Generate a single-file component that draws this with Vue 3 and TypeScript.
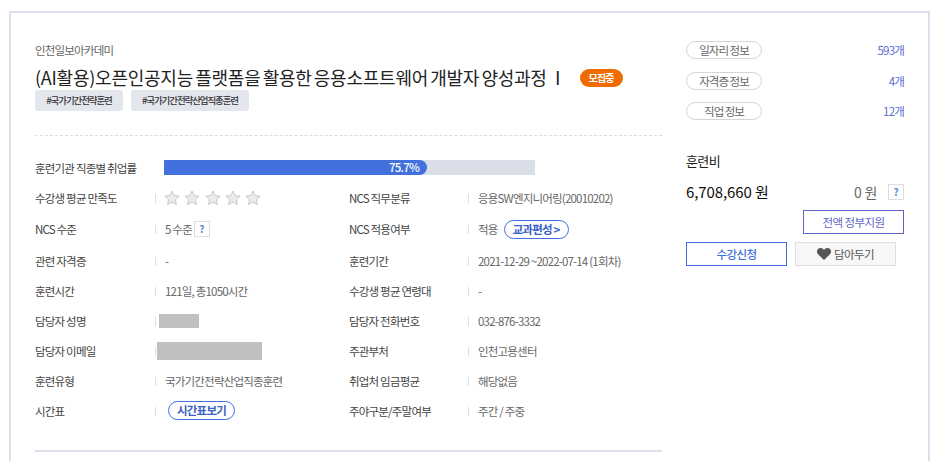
<template>
  <div class="page">
    <div class="card">
      <div class="main">
        <div class="org">인천일보아카데미</div>
        <div class="title-row">
          <h1 class="title">(AI활용)오픈인공지능 플랫폼을 활용한 응용소프트웨어 개발자 양성과정 Ⅰ</h1>
          <span class="status">모집중</span>
        </div>
        <div class="tags">
          <span v-for="t in tags" :key="t" class="tag">{{ t }}</span>
        </div>
        <div class="dash"></div>
        <div class="rate-row">
          <span class="label">훈련기관 직종별 취업률</span>
          <div class="bar">
            <div class="bar-fill" :style="{ width: fillWidth + 'px' }">{{ rate }}%</div>
          </div>
        </div>
        <div class="grid">
          <div class="cell">
            <span class="label">수강생 평균 만족도</span>
            <div class="value stars">
              <svg v-for="n in 5" :key="n" width="16" height="16" viewBox="0 0 16 16">
                <path d="M8 1l2.100 4.600 5 .6-3.700 3.400 1 4.900L8 12.100l-4.400 2.400 1-4.900L.9 6.200l5-.6z" fill="#ececec" stroke="#c8c8c8" stroke-width="1" />
              </svg>
            </div>
          </div>
          <div class="cell right">
            <span class="label">NCS 직무분류</span>
            <div class="value">응용SW엔지니어링(20010202)</div>
          </div>
          <div class="cell">
            <span class="label">NCS 수준</span>
            <div class="value">5 수준<span class="help small">?</span></div>
          </div>
          <div class="cell right">
            <span class="label">NCS 적용여부</span>
            <div class="value">적용<span class="pill edu">교과편성 &gt;</span></div>
          </div>
          <div class="cell">
            <span class="label">관련 자격증</span>
            <div class="value">-</div>
          </div>
          <div class="cell right">
            <span class="label">훈련기간</span>
            <div class="value">2021-12-29 ~2022-07-14 (1회차)</div>
          </div>
          <div class="cell">
            <span class="label">훈련시간</span>
            <div class="value">121일, 총1050시간</div>
          </div>
          <div class="cell right">
            <span class="label">수강생 평균 연령대</span>
            <div class="value">-</div>
          </div>
          <div class="cell">
            <span class="label">담당자 성명</span>
            <div class="value"><span class="mask name"></span></div>
          </div>
          <div class="cell right">
            <span class="label">담당자 전화번호</span>
            <div class="value">032-876-3332</div>
          </div>
          <div class="cell">
            <span class="label">담당자 이메일</span>
            <div class="value"><span class="mask email"></span></div>
          </div>
          <div class="cell right">
            <span class="label">주관부처</span>
            <div class="value">인천고용센터</div>
          </div>
          <div class="cell">
            <span class="label">훈련유형</span>
            <div class="value">국가기간전략산업직종훈련</div>
          </div>
          <div class="cell right">
            <span class="label">취업처 임금평균</span>
            <div class="value">해당없음</div>
          </div>
          <div class="cell">
            <span class="label">시간표</span>
            <div class="value"><span class="pill plan">시간표보기</span></div>
          </div>
          <div class="cell right">
            <span class="label">주야구분/주말여부</span>
            <div class="value">주간 / 주중</div>
          </div>
        </div>
        <div class="rule"></div>
      </div>

      <aside class="side">
        <div v-for="i in infos" :key="i.name" class="info">
          <span class="info-name">{{ i.name }}</span>
          <span class="info-count">{{ i.count }}</span>
        </div>
        <div class="fee-title">훈련비</div>
        <div class="fee-row">
          <span class="fee">6,708,660 원</span>
          <span class="fee-sub">0 원</span>
          <span class="help big">?</span>
        </div>
        <div class="support-row">
          <button class="support">전액 정부지원</button>
        </div>
        <div class="actions">
          <button class="apply">수강신청</button>
          <button class="wish">
            <svg width="14" height="12" viewBox="0 0 14 12">
              <path d="M7 12L1 6.200C-.4 4.700-.3 2.300 1 1 2.500-.3 4.800-.3 6.200 1.100L7 2l.8-.9C9.200-.3 11.500-.3 13 1c1.300 1.300 1.400 3.700 0 5.200z" fill="#555" />
            </svg>
            담아두기
          </button>
        </div>
      </aside>
    </div>
  </div>
</template>

<script setup lang="ts">
const rate = 75.7;
const fillWidth = 263;
const tags: string[] = ["#국가기간전략훈련", "#국가기간전략산업직종훈련"];
const infos = [
  { name: "일자리 정보", count: "593개" },
  { name: "자격증 정보", count: "4개" },
  { name: "직업 정보", count: "12개" },
];
</script>

<style>
html,
body {
  margin: 0;
  overflow: hidden;
  background: #fff;
}
</style>

<style scoped>
.page {
  height: 461px;
  overflow: hidden;
  padding: 11px 0 0 9px;
  box-sizing: border-box;
  font-family: "Noto Sans CJK KR", "Noto Sans", sans-serif;
  color: #555;
  font-size: 11.5px;
  letter-spacing: -0.8px;
}
.card {
  width: 921px;
  height: 520px;
  box-sizing: border-box;
  border: 2px solid #dce0ec;
  padding: 28px 0 0 24px;
  display: flex;
}
.main {
  width: 627px;
}
.org {
  line-height: 18px;
  color: #666;
}
.title-row {
  display: flex;
  align-items: center;
  margin-top: 6px;
}
.title {
  margin: 0;
  font-size: 18px;
  line-height: 24px;
  font-weight: 400;
  color: #222;
  letter-spacing: -0.24px;
  word-spacing: -1.6px;
}
.status {
  margin: 2px 0 0 13px;
  width: 43px;
  height: 18px;
  border-radius: 9px;
  background: #ef6c00;
  color: #fff;
  font-size: 10px;
  font-weight: 700;
  line-height: 18px;
  text-align: center;
}
.tags {
  display: flex;
  gap: 8px;
  margin-top: 1px;
}
.tag {
  height: 21px;
  line-height: 21px;
  width: 88px;
  text-align: center;
  border-radius: 3px;
  background: #e3e6ed;
  color: #333;
  font-size: 9.5px;
  font-weight: 500;
  letter-spacing: -1.1px;
}
.tag:last-child {
  width: 118px;
}
.dash {
  margin-top: 24px;
  border-top: 1px dashed #ddd;
}
.rate-row {
  display: flex;
  align-items: center;
  margin-top: 24px;
  height: 15px;
}
.label {
  width: 120px;
  flex: none;
  color: #444;
  white-space: nowrap;
}
.rate-row .label {
  width: 129px;
}
.bar {
  width: 371px;
  height: 15px;
  background: #d9dee9;
}
.bar-fill {
  height: 100%;
  background: #4270dc;
  border-radius: 0 8px 8px 0;
  color: #fff;
  font-size: 11.5px;
  font-weight: 500;
  text-align: right;
  padding-right: 8px;
  box-sizing: border-box;
  line-height: 15px;
}
.grid {
  display: grid;
  grid-template-columns: 314px 313px;
  grid-template-rows: 30px 32px 31px 29px 31px 29px 31px 29px;
  margin-top: 8px;
}
.cell {
  display: flex;
  align-items: center;
}
.cell.right .label {
  width: 119px;
}
.value {
  display: flex;
  align-items: center;
  padding-left: 10px;
  position: relative;
  color: #666;
}
.value::before {
  content: "";
  position: absolute;
  left: 0;
  top: 50%;
  margin-top: -4px;
  width: 1px;
  height: 9px;
  background: #ddd;
}
.stars {
  gap: 4.3px;
}
.stars svg:first-child {
  margin-left: -1px;
}
.help {
  display: inline-block;
  box-sizing: border-box;
  width: 16px;
  height: 16px;
  line-height: 14px;
  font-size: 10px;
  border: 1px solid #ddd;
  color: #5f86e0;
  font-weight: 700;
  text-align: center;
  background: #fff;
  letter-spacing: 0;
}
.help.small {
  margin-left: 2px;
}
.help.big {
  margin-left: 11px;
}
.pill {
  box-sizing: border-box;
  height: 19px;
  line-height: 16px;
  border: 1px solid #4270dc;
  border-radius: 10px;
  color: #3a62c4;
  font-weight: 700;
  text-align: center;
}
.pill.edu {
  width: 65px;
  margin-left: 6px;
}
.pill.plan {
  width: 67px;
  margin-left: 3px;
}
.mask {
  display: block;
  background: #c0c0c0;
}
.mask.name {
  width: 40px;
  height: 14px;
  margin-left: -6px;
}
.mask.email {
  width: 105px;
  height: 18px;
  margin-left: -8px;
}
.rule {
  margin-top: 25px;
  height: 2px;
  background: #dce0ec;
}
.side {
  width: 218px;
  margin-left: 24px;
}
.info {
  display: flex;
  align-items: center;
  justify-content: space-between;
  height: 18px;
  margin-bottom: 12.5px;
}
.info-name {
  box-sizing: border-box;
  width: 76px;
  height: 18px;
  line-height: 16px;
  border: 1px solid #d5d5d5;
  border-radius: 9px;
  text-align: center;
  color: #666;
  letter-spacing: -1px;
}
.info-count {
  color: #5a6bd6;
}
.fee-title {
  margin-top: 31px;
  font-size: 13px;
  line-height: 19px;
  color: #222;
  letter-spacing: -0.6px;
}
.fee-row {
  display: flex;
  align-items: center;
  margin-top: 11px;
}
.fee {
  font-size: 15px;
  color: #111;
  line-height: 22px;
  flex: 1;
  letter-spacing: -0.1px;
}
.fee-sub {
  font-size: 14px;
  color: #666;
  letter-spacing: -0.3px;
}
.support-row {
  display: flex;
  justify-content: flex-end;
  margin-top: 7px;
}
button {
  font-family: inherit;
  font-size: 11.5px;
  letter-spacing: -0.6px;
  box-sizing: border-box;
  height: 24px;
  width: 101px;
  padding: 0;
  background: #fff;
  cursor: pointer;
}
.support {
  border: 1px solid #5f63c8;
  color: #5f63c8;
}
.actions {
  display: flex;
  gap: 8px;
  margin-top: 8px;
}
.apply {
  border: 1px solid #3f6fdc;
  color: #3f6fdc;
  font-weight: 500;
}
.wish {
  border: 1px solid #ddd;
  background: #f7f7f7;
  color: #555;
  display: flex;
  align-items: center;
  justify-content: center;
  gap: 3px;
}
</style>
